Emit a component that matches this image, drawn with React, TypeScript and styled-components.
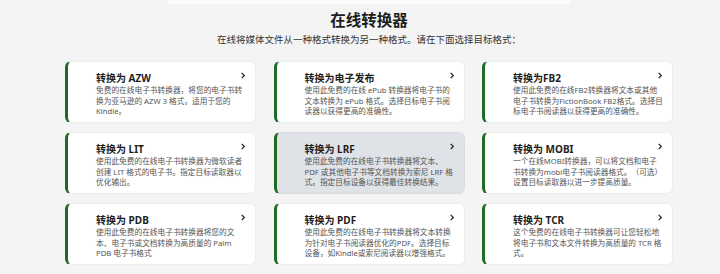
import React from "react";
import styled, { createGlobalStyle } from "styled-components";

const GlobalStyle = createGlobalStyle`
  html, body {
    margin: 0;
    padding: 0;
    background: #f4f4f4;
    font-family: "Noto Sans", "Noto Sans CJK SC", sans-serif;
  }
`;

const Page = styled.div`
  width: 608px;
  margin-left: 65px;
  display: flex;
  flex-direction: column;
  align-items: center;
`;

const TopBand = styled.div`
  width: 401px;
  height: 4px;
  background: #fbfbfb;
`;

const Heading = styled.h1`
  margin: 6px 0 0;
  font-size: 15.5px;
  line-height: 20px;
  font-weight: 700;
  color: #1d1d1d;
`;

const Subtitle = styled.p`
  margin: 3px 0 0;
  font-size: 9.5px;
  line-height: 13px;
  color: #333;
`;

const Grid = styled.div`
  margin-top: 15px;
  width: 100%;
  display: grid;
  grid-template-columns: repeat(3, 191px);
  column-gap: 17.5px;
  row-gap: 9px;
`;

const Card = styled.a<{ $active?: boolean }>`
  position: relative;
  display: flex;
  flex-direction: column;
  height: 62px;
  box-sizing: border-box;
  padding: 9px 10px 7px 28px;
  background: ${(p) => (p.$active ? "#dfe2e6" : "#ffffff")};
  border: 1px solid ${(p) => (p.$active ? "#d8dbe0" : "#ececec")};
  border-left: 3px solid #1f6a25;
  border-radius: 6px;
  text-decoration: none;
`;

const Title = styled.div`
  font-size: 10px;
  line-height: 14px;
  font-weight: 700;
  color: #1e1e1e;
`;

const Desc = styled.div`
  width: 150px;
  font-size: 7.7px;
  line-height: 10.7px;
  color: #555;
  text-spacing-trim: space-all;
`;

const Chevron = styled.svg`
  position: absolute;
  right: 9px;
  top: 10px;
  width: 6px;
  height: 7px;
`;

const cards = [
  { t: "转换为 AZW", d: "免费的在线电子书转换器，将您的电子书转换为亚马逊的 AZW 3 格式，适用于您的 Kindle。" },
  { t: "转换为电子发布", d: "使用此免费的在线 ePub 转换器将电子书的文本转换为 ePub 格式。选择目标电子书阅读器以获得更高的准确性。" },
  { t: "转换为FB2", d: "使用此免费的在线FB2转换器将文本或其他电子书转换为FictionBook FB2格式。选择目标电子书阅读器以获得更高的准确性。" },
  { t: "转换为 LIT", d: "使用此免费的在线电子书转换器为微软读者创建 LIT 格式的电子书。指定目标读取器以优化输出。" },
  { t: "转换为 LRF", d: "使用此免费的在线电子书转换器将文本、PDF 或其他电子书等文档转换为索尼 LRF 格式。指定目标设备以获得最佳转换结果。", active: true },
  { t: "转换为 MOBI", d: "一个在线MOBI转换器，可以将文档和电子书转换为mobi电子书阅读器格式。（可选）设置目标读取器以进一步提高质量。" },
  { t: "转换为 PDB", d: "使用此免费的在线电子书转换器将您的文本、电子书或文档转换为高质量的 Palm PDB 电子书格式" },
  { t: "转换为 PDF", d: "使用此免费的在线电子书转换器将文本转换为针对电子书阅读器优化的PDF。选择目标设备，如Kindle或索尼阅读器以增强格式。" },
  { t: "转换为 TCR", d: "这个免费的在线电子书转换器可让您轻松地将电子书和文本文件转换为高质量的 TCR 格式。" },
];

export default function App() {
  return (
    <>
      <GlobalStyle />
      <Page>
        <TopBand />
        <Heading>在线转换器</Heading>
        <Subtitle>在线将媒体文件从一种格式转换为另一种格式。请在下面选择目标格式：</Subtitle>
        <Grid>
          {cards.map((c) => (
            <Card key={c.t} $active={c.active}>
              <Title>{c.t}</Title>
              <Desc>{c.d}</Desc>
              <Chevron viewBox="0 0 6 8">
                <path d="M1.5 1 L4.5 4 L1.5 7" fill="none" stroke="#222" strokeWidth="1.4" />
              </Chevron>
            </Card>
          ))}
        </Grid>
      </Page>
    </>
  );
}
